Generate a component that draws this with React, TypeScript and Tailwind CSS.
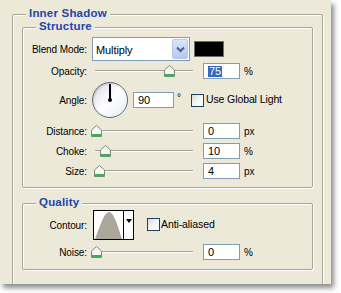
import React from "react";

const Thumb = ({ x }: { x: number }) => (
  <svg
    className="absolute top-[2px]"
    style={{ left: x - 5 }}
    width="11"
    height="12"
    viewBox="0 0 11 12"
  >
    <path d="M0.5 5 L5.5 0.5 L10.5 5 V11.5 H0.5 Z" fill="#f6f7f2" stroke="#7d8a7d" />
    <rect x="1" y="9" width="9" height="2.5" fill="#3fae5a" />
  </svg>
);

const Slider = ({ pos }: { pos: number }) => (
  <div className="relative h-4 w-[106px]">
    <div className="absolute left-[3px] top-[7px] h-[2px] w-[98px] border-t border-[#a3a394] bg-white" />
    <Thumb x={3 + pos} />
  </div>
);

const Field = ({ value, width = "w-[37px]", selected = false }: { value: string; width?: string; selected?: boolean }) => (
  <div className={`flex h-4 ${width} items-center border border-[#7f9db9] bg-white pl-[4px] text-[11px] leading-none`}>
    {selected ? <span className="bg-[#316ac5] px-px text-white">{value}</span> : <span>{value}</span>}
  </div>
);

const Checkbox = () => (
  <div className="h-[13px] w-[13px] border border-[#1c3f66] bg-gradient-to-br from-[#dcdcd6] via-[#f4f4f0] to-white" />
);

const SliderRow = ({ label, pos, value, unit, selected }: { label: string; pos: number; value: string; unit: string; selected?: boolean }) => (
  <div className="flex h-4 items-center">
    <span className="w-[64px] whitespace-nowrap text-right">{label}</span>
    <div className="ml-[5px]">
      <Slider pos={pos} />
    </div>
    <div className="ml-[5px]">
      <Field value={value} selected={selected} />
    </div>
    <span className="ml-[4px]">{unit}</span>
  </div>
);

const Group = ({ title, className, children }: { title: string; className: string; children: React.ReactNode }) => (
  <div className={`relative rounded-[2px] border border-[#a6a697] shadow-[inset_1px_1px_0_#fff,1px_1px_0_#fff] ${className}`}>
    <div className="-mt-[9px] mb-[2px] flex h-[14px]">
      <span className="ml-[13px] whitespace-nowrap bg-[#ece9d8] px-[3px] text-[11.5px] leading-[14px] font-bold tracking-[0.2px] text-[#1c46b0]">
        {title}
      </span>
    </div>
    {children}
  </div>
);

export default function App() {
  return (
    <div className="h-[293px] w-[341px] bg-white">
      <div
        className="h-[284px] w-[331px] overflow-hidden bg-[#ece9d8] pl-[12px] pt-[14px] text-[10px] tracking-[-0.1px] text-black shadow-[3px_4px_5px_rgba(0,0,0,0.45)]"
        style={{ fontFamily: '"Liberation Sans", Arial, sans-serif' }}
      >
        <Group title="Inner Shadow" className="h-[290px] w-[311px] pr-[9px]">
          <div className="pl-[9px] pt-[5px]">
            <Group title="Structure" className="h-[161px] w-[291px]">
              <div className="flex flex-col pt-[2px]">
                <div className="flex h-6 items-center">
                  <span className="w-[64px] whitespace-nowrap text-right">Blend Mode:</span>
                  <div className="ml-[5px] flex h-6 w-[98px] items-center border border-[#7f9db9] bg-white pl-[3px] pr-[1px]">
                    <span className="mt-[2px] flex-1 text-[11px]">Multiply</span>
                    <div className="flex h-[20px] w-[16px] items-center justify-center rounded-[2px] border border-[#b5c8f0] bg-gradient-to-b from-[#dbe6fd] to-[#b2c8f4]">
                      <svg width="9" height="7" viewBox="0 0 9 7">
                        <path d="M1 1.5 L4.5 5 L8 1.5" fill="none" stroke="#4d6185" strokeWidth="2" />
                      </svg>
                    </div>
                  </div>
                  <div className="ml-[4px] h-[16px] w-[30px] border border-[#6c6c6c] bg-black" />
                </div>
                <div className="mt-[2px]">
                  <SliderRow label="Opacity:" pos={74} value="75" unit="%" selected />
                </div>
                <div className="mt-[3px] flex h-9 items-center">
                  <span className="w-[64px] text-right">Angle:</span>
                  <div className="relative ml-[5px] h-9 w-9 rounded-full border border-[#5f6b7a] bg-gradient-to-br from-[#d8dbe6] via-white to-[#e8eaf2] shadow-[inset_1px_1px_2px_rgba(0,0,0,0.15)]">
                    <div className="absolute left-[16px] top-[1px] h-[16px] w-[2px] bg-black" />
                    <div className="absolute left-[15px] top-[15px] h-[4px] w-[4px] rounded-full bg-black" />
                  </div>
                  <div className="ml-[5px]">
                    <Field value="90" width="w-[41px]" />
                  </div>
                  <span className="mb-[6px] ml-[3px]">°</span>
                  <div className="ml-[10px]">
                    <Checkbox />
                  </div>
                  <span className="ml-[2px] whitespace-nowrap text-[10.5px]">Use Global Light</span>
                </div>
                <div className="mt-[5px]">
                  <SliderRow label="Distance:" pos={1} value="0" unit="px" />
                </div>
                <div className="mt-[4px]">
                  <SliderRow label="Choke:" pos={10} value="10" unit="%" />
                </div>
                <div className="mt-[4px]">
                  <SliderRow label="Size:" pos={4} value="4" unit="px" />
                </div>
              </div>
            </Group>
            <Group title="Quality" className="mt-[15px] h-[67px] w-[291px]">
              <div className="-mt-[1px] flex h-[30px] items-center">
                <span className="w-[64px] text-right">Contour:</span>
                <div className="ml-[6px] flex h-[30px] w-[41px] border border-black bg-white">
                  <svg width="29" height="28" viewBox="0 0 29 28">
                    <path d="M1 28 C6 16 10 1 15 1 C20 1 24 16 28 28 Z" fill="#a9a89b" />
                  </svg>
                  <div className="flex w-[10px] items-start justify-center border-l border-black pt-[8px]">
                    <svg width="6" height="4" viewBox="0 0 6 4">
                      <path d="M0 0 H6 L3 4 Z" fill="#000" />
                    </svg>
                  </div>
                </div>
                <div className="mb-[1px] ml-[13px]">
                  <Checkbox />
                </div>
                <span className="mb-[1px] ml-[1px] whitespace-nowrap text-[10.5px]">Anti-aliased</span>
              </div>
              <div className="mt-[4px]">
                <SliderRow label="Noise:" pos={1} value="0" unit="%" />
              </div>
            </Group>
          </div>
        </Group>
      </div>
    </div>
  );
}
